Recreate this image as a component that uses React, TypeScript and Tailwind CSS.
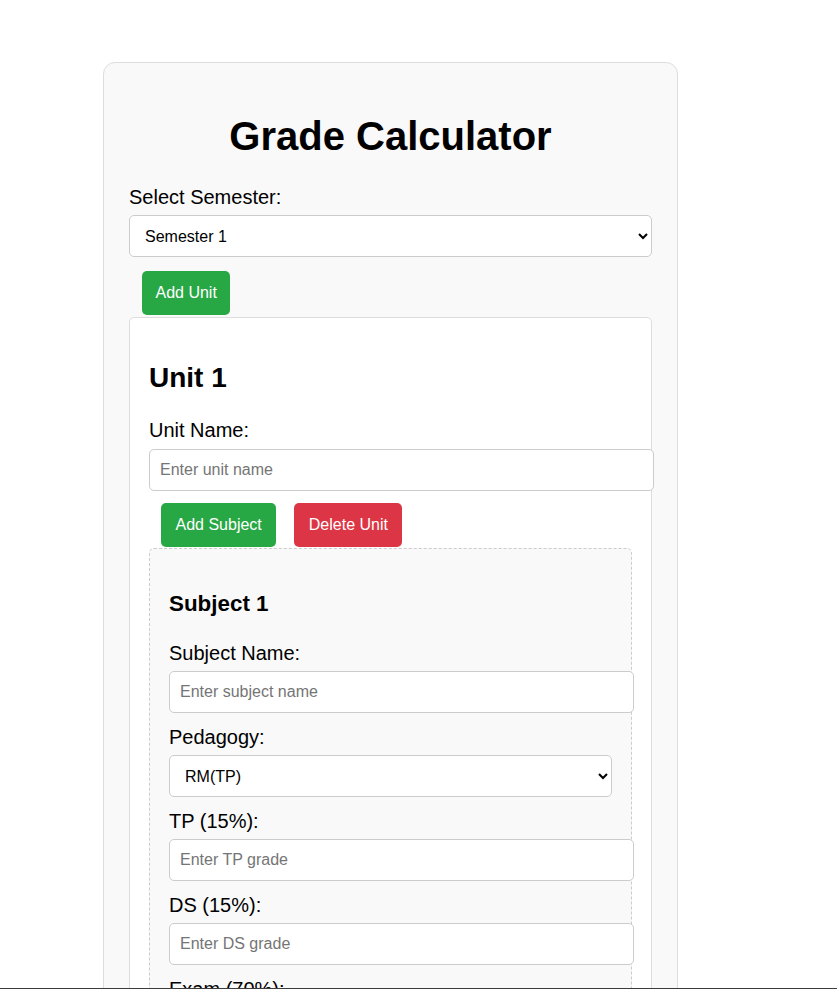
const Label = ({ children, className = "" }: { children: string; className?: string }) => (
  <label className={`block text-[20px] leading-[23px] text-black ${className}`}>{children}</label>
);

const TextInput = ({ placeholder, className = "" }: { placeholder: string; className?: string }) => (
  <input
    type="text"
    placeholder={placeholder}
    className={`box-content block w-full h-[20px] px-[10px] py-[10px] border border-[#ccc] rounded-[5px] bg-white text-[16px] placeholder:text-[#757575] ${className}`}
  />
);

const App = () => (
  <div className="min-h-[989px] bg-white font-['Liberation_Sans',Arial,sans-serif] text-black">
    <div className="ml-[103px] mt-[62px] w-[575px] border border-[#ddd] rounded-[12px] bg-[#f9f9f9] px-[25px] pb-[25px]">
      <h1 className="pt-[50px] mb-[27px] text-center text-[40px] leading-[46px] font-bold">Grade Calculator</h1>

      <Label>Select Semester:</Label>
      <select className="block w-full h-[42px] mt-[6px] pl-[11px] pr-[10px] border border-[#ccc] rounded-[5px] bg-white text-[16px]">
        <option>Semester 1</option>
        <option>Semester 2</option>
      </select>

      <button className="mt-[14px] ml-[13px] h-[44px] px-[13.5px] rounded-[5px] bg-[#28a745] text-white text-[16px]">Add Unit</button>

      <div className="mt-[2px] border border-[#ddd] rounded-[5px] bg-white px-[19px] pt-[19px] pb-[19px]">
        <h2 className="mt-[25px] mb-[25px] text-[28px] leading-[32px] font-bold">Unit 1</h2>
        <Label>Unit Name:</Label>
        <TextInput placeholder="Enter unit name" className="mt-[7px]" />

        <div className="flex gap-[18px] mt-[12px] ml-[12px]">
          <button className="h-[44px] px-[14.5px] rounded-[5px] bg-[#28a745] text-white text-[16px]">Add Subject</button>
          <button className="h-[44px] px-[14.5px] rounded-[5px] bg-[#dc3545] text-white text-[16px]">Delete Unit</button>
        </div>

        <div className="mt-px border border-dashed border-[#ccc] rounded-[5px] bg-[#f9f9f9] px-[19px] pt-[19px] pb-[19px]">
          <h3 className="mt-[23px] mb-[25px] text-[22.4px] leading-[26px] font-bold">Subject 1</h3>
          <Label>Subject Name:</Label>
          <TextInput placeholder="Enter subject name" className="mt-[6px]" />

          <Label className="mt-[13px]">Pedagogy:</Label>
          <select className="block w-full h-[42px] mt-[6px] pl-[11px] pr-[10px] border border-[#ccc] rounded-[5px] bg-white text-[16px]">
            <option>RM(TP)</option>
            <option>RM</option>
          </select>

          <Label className="mt-[13px]">TP (15%):</Label>
          <TextInput placeholder="Enter TP grade" className="mt-[6px]" />

          <Label className="mt-[13px]">DS (15%):</Label>
          <TextInput placeholder="Enter DS grade" className="mt-[6px]" />

          <Label className="mt-[13px]">Exam (70%):</Label>
          <TextInput placeholder="Enter Exam grade" className="mt-[6px]" />
        </div>
      </div>
    </div>
    <div className="fixed bottom-0 left-0 right-0 h-px bg-[#3c3c3c]" />
  </div>
);

export default App;
